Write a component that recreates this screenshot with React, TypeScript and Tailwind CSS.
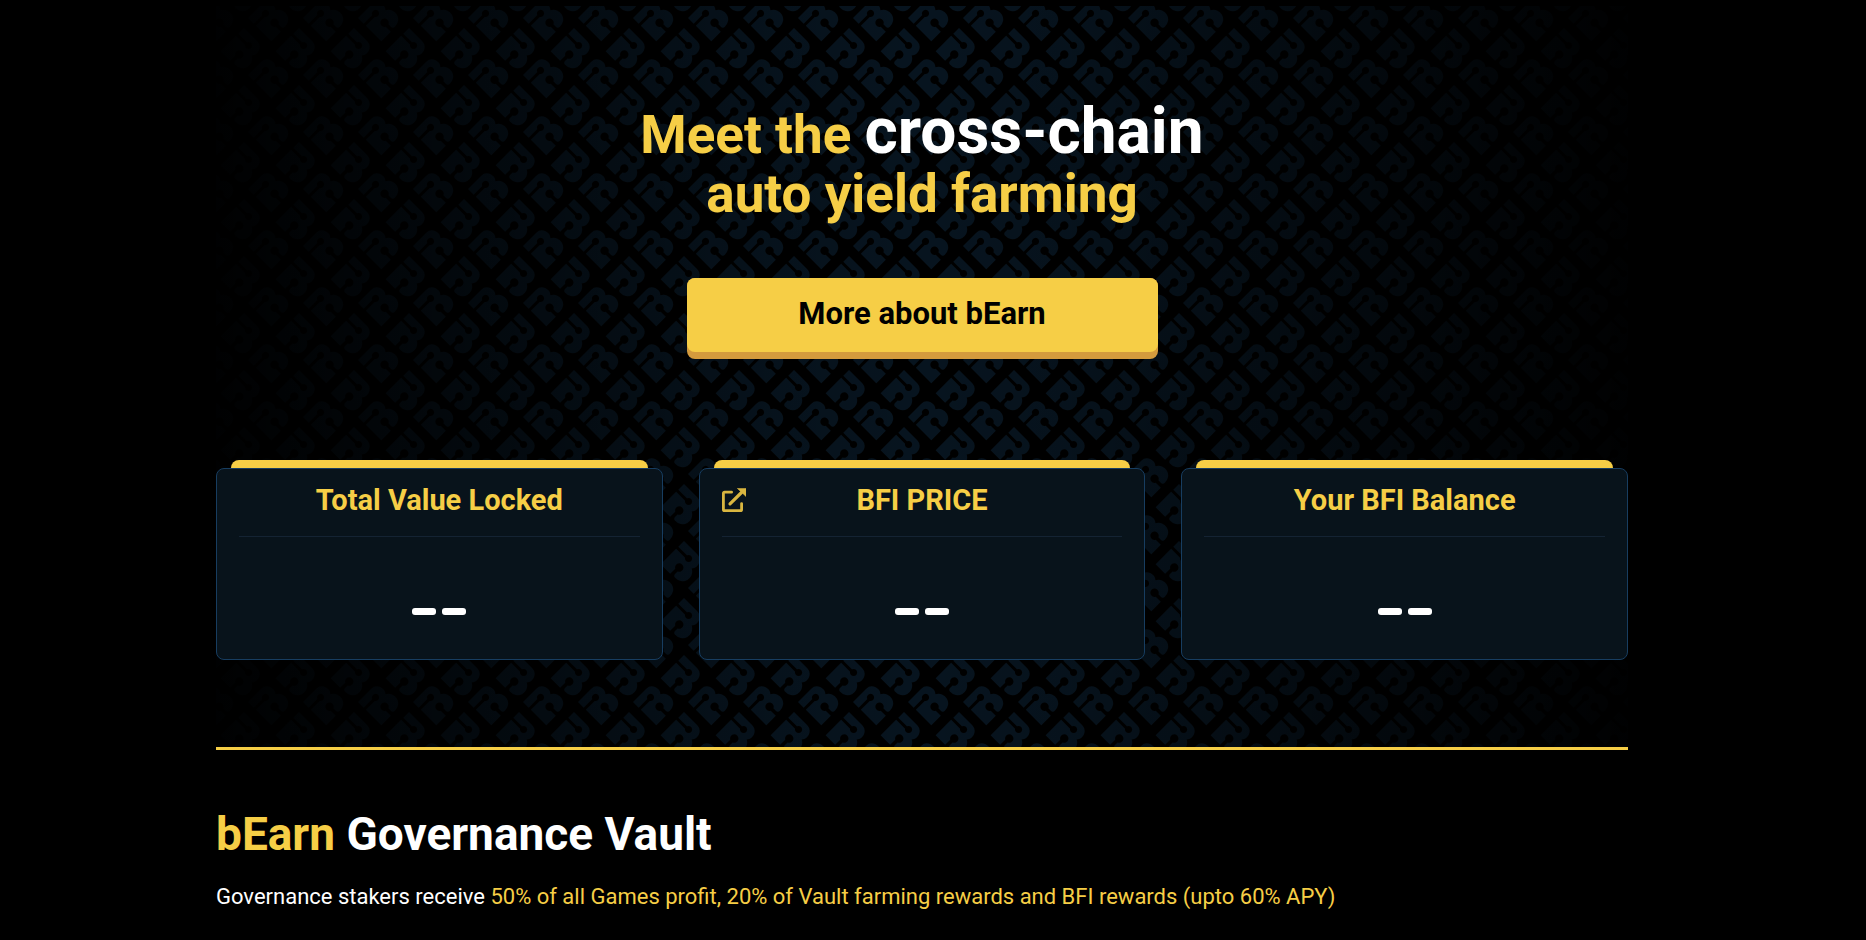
import type { ReactNode } from "react";

const GLYPH =
  "M0 0H18.8A8.4 8.4 0 0 1 24.8 14A9.6 9.6 0 0 1 19.8 32.2Q17 32.2 17 29.4V26A4.2 4.2 0 1 0 13.4 25.8V33H0V11.1H12.6A3.6 3.6 0 1 0 12.2 8H0Z";

const TILE_OFFSETS = [-1, 0, 1];

function LogoPattern() {
  return (
    <svg className="absolute inset-0 size-full" aria-hidden="true">
      <defs>
        <pattern id="logo-tile" width="55" height="57" patternUnits="userSpaceOnUse">
          {TILE_OFFSETS.map((col) =>
            TILE_OFFSETS.map((row) => (
              <g key={`${col}:${row}`} transform={`translate(${col * 55} ${row * 57})`} fill="#07141f">
                <path d={GLYPH} transform="translate(28 22) rotate(45)" />
                <path d={GLYPH} transform="translate(32 12) rotate(-45)" />
              </g>
            )),
          )}
        </pattern>
        <linearGradient id="side-fade">
          <stop offset="0" stopColor="#000" stopOpacity="0.95" />
          <stop offset="0.4" stopColor="#000" stopOpacity="0.1" />
          <stop offset="0.5" stopColor="#000" stopOpacity="0" />
          <stop offset="0.6" stopColor="#000" stopOpacity="0.1" />
          <stop offset="1" stopColor="#000" stopOpacity="0.95" />
        </linearGradient>
      </defs>
      <rect width="100%" height="100%" fill="url(#logo-tile)" />
      <rect width="100%" height="100%" fill="url(#side-fade)" />
    </svg>
  );
}

function ExternalLinkIcon() {
  return (
    <svg viewBox="0 0 24 24" className="size-6" fill="none" aria-hidden="true">
      <path
        d="M9.6 4.2H2.6Q1.4 4.2 1.4 5.4V21.4Q1.4 22.6 2.6 22.6H18.4Q19.6 22.6 19.6 21.4V15.6"
        stroke="currentColor"
        strokeWidth="2.8"
        strokeLinecap="round"
      />
      <path d="M8 15.8L19.5 4.5" stroke="currentColor" strokeWidth="3.2" strokeLinecap="round" />
      <path d="M15.4 0.4H24V8.4Z" fill="currentColor" stroke="currentColor" strokeWidth="0.6" />
    </svg>
  );
}

function EmptyValue() {
  return (
    <div role="img" aria-label="No value" className="flex h-[122px] justify-center gap-[6px] pt-[71px]">
      <span className="h-[7px] w-6 rounded-[3px] bg-white" />
      <span className="h-[7px] w-6 rounded-[3px] bg-white" />
    </div>
  );
}

function StatCard({ title, action }: { title: string; action?: ReactNode }) {
  return (
    <section className="flex flex-col">
      <div className="mx-[15px] h-2 rounded-t-lg bg-[#f6ce46]" />
      <div className="rounded-lg border border-[#173d60] bg-[#08131b] px-[22px] pt-[11px]">
        <div className="grid grid-cols-[24px_1fr_24px] items-center border-b border-[#142333] pb-4">
          <span className="flex">{action}</span>
          <h2 className="text-center text-[29px] leading-10 font-bold text-[#f6ce46]">{title}</h2>
        </div>
        <EmptyValue />
      </div>
    </section>
  );
}

export default function App() {
  return (
    <div className="min-h-screen bg-black pr-[22px] font-['Roboto',sans-serif]">
      <main className="mx-auto max-w-[1412px] pt-[6px]">
        <header className="relative border-b-[3px] border-[#f6ce46]">
          <LogoPattern />
          <div className="relative flex flex-col items-center pt-[100px] pb-[87px]">
            <h1 className="text-center text-[53px] leading-[59px] font-bold text-[#f6ce46]">
              Meet the <span className="text-[64px] leading-[50px] text-white">cross-chain</span>
              <br />
              auto yield farming
            </h1>
            <button
              type="button"
              className="mt-[54px] h-[81px] w-[471px] rounded-lg bg-[#d49b3d] pb-[7px] text-[31px] font-bold text-black"
            >
              <span className="flex h-full items-center justify-center rounded-lg bg-[#f6ce46] pb-[2px]">
                More about bEarn
              </span>
            </button>
            <div className="mt-[101px] grid w-full grid-cols-3 gap-9">
              <StatCard title="Total Value Locked" />
              <StatCard
                title="BFI PRICE"
                action={
                  <a href="#price" aria-label="Open BFI price" className="text-[#d9b640]">
                    <ExternalLinkIcon />
                  </a>
                }
              />
              <StatCard title="Your BFI Balance" />
            </div>
          </div>
        </header>
        <section>
          <h2 className="mt-14 text-[46px] leading-14 font-bold text-white">
            <span className="text-[#f6ce46]">bEarn</span> Governance Vault
          </h2>
          <p className="mt-5 text-[22px] leading-[30px] text-white">
            Governance stakers receive{" "}
            <span className="text-[#f6ce46]">
              50% of all Games profit, 20% of Vault farming rewards and BFI rewards (upto 60% APY)
            </span>
          </p>
        </section>
      </main>
    </div>
  );
}
